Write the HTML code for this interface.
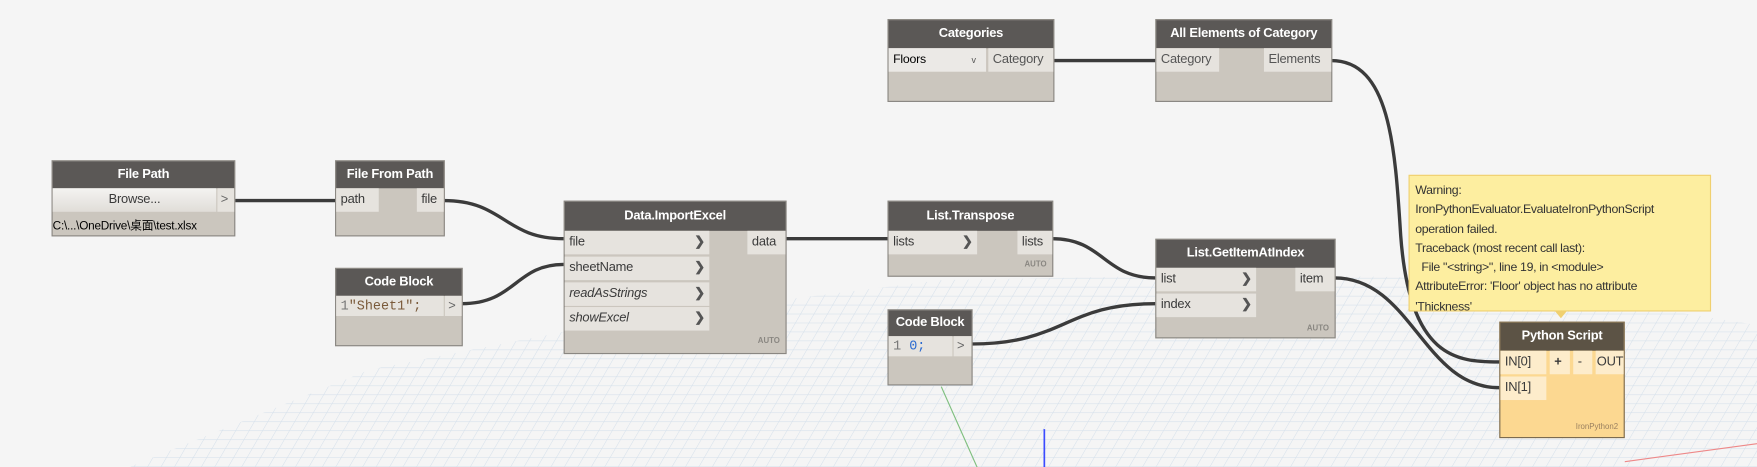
<!DOCTYPE html>
<html><head><meta charset="utf-8"><style>
*{margin:0;padding:0;box-sizing:border-box}
body{width:1757px;height:467px;overflow:hidden;background:#f5f5f5;font-family:"Liberation Sans","Noto Sans CJK SC",sans-serif}
#c{position:absolute;left:0;top:0;width:1568px;height:417px;transform:scale(1.12054);transform-origin:0 0}
.n{position:absolute;background:#cbc6be;border:1px solid #8a8782}
.h{position:absolute;left:0;right:0;top:0;background:#5b5856;color:#fff;font-weight:bold;font-size:11.5px;text-align:center;letter-spacing:-0.2px}
.p{position:absolute;background:#e6e3de;font-size:11.5px;color:#3a3a3a;line-height:21px;padding-left:4px;white-space:nowrap;letter-spacing:-0.2px}
.a{position:absolute;right:4px;top:0;font-weight:bold;color:#555}
.auto{position:absolute;right:5px;font-size:7px;font-weight:bold;color:#8a8782}
svg{position:absolute;left:0;top:0}
</style></head><body><div id="c">
<svg width="1568" height="417">
<defs><pattern id="g" width="12" height="8" patternUnits="userSpaceOnUse" patternTransform="skewX(-30)"><path d="M0 0H12M0 0V8" stroke="#d3dfea" stroke-width="1" fill="none"/></pattern></defs>
<polygon points="115,417 330,330 560,285 840,250 1100,245 1300,248 1568,290 1568,417" fill="url(#g)"/>
<line x1="840" y1="345" x2="872" y2="417" stroke="#7fbf7f" stroke-width="1"/>
<line x1="932" y1="383" x2="932" y2="417" stroke="#3b4bff" stroke-width="1.5"/>
<line x1="1450" y1="412" x2="1568" y2="396" stroke="#e88" stroke-width="1"/>
<g stroke="#3b3b3b" stroke-width="3" fill="none">
<path d="M209 179H299"/>
<path d="M396 179C450 179 450 213 503 213"/>
<path d="M412 271C460 271 460 236 503 236"/>
<path d="M701 213H792"/>
<path d="M939 213C985 213 985 248 1031 248"/>
<path d="M867 307C950 307 950 271 1031 271"/>
<path d="M940 54H1031"/>
<path d="M1188 54C1240 54 1245 130 1250 210C1258 320 1300 323 1338 323"/>
<path d="M1191 248C1260 248 1270 346 1338 346"/>
</g>
</svg>

<div class="n" style="left:792px;top:17px;width:149px;height:74px"><div class="h" style="height:25px;line-height:25px">Categories</div>
<div class="p" style="left:0;top:25px;width:87px;background:#ebe9e6;font-size:11px;color:#000">Floors<span style="position:absolute;left:74px;font-size:8px;color:#555">v</span></div>
<div class="p" style="left:89px;top:25px;width:58px;color:#555">Category</div></div>
<div class="n" style="left:1031px;top:17px;width:158px;height:74px"><div class="h" style="height:25px;line-height:25px">All Elements of Category</div>
<div class="p" style="left:0;top:25px;width:56px;color:#555">Category</div>
<div class="p" style="left:96px;top:25px;width:60px;color:#555">Elements</div></div>
<div class="n" style="left:46px;top:143px;width:164px;height:68px"><div class="h" style="height:24px;line-height:24px">File Path</div>
<div class="p" style="left:0;top:24px;width:146px;text-align:center;padding:0;background:linear-gradient(#f4f3f1,#e0ddd8)">Browse...</div>
<div class="p" style="left:147px;top:24px;width:15px;padding-left:3px;color:#666">&gt;</div>
<div style="position:absolute;left:0;top:50px;font-size:10.5px;color:#000;white-space:nowrap;letter-spacing:-0.2px">C:\...\OneDrive\桌面\test.xlsx</div></div>
<div class="n" style="left:299px;top:143px;width:98px;height:68px"><div class="h" style="height:24px;line-height:24px">File From Path</div>
<div class="p" style="left:0;top:24px;width:38px">path</div>
<div class="p" style="left:72px;top:24px;width:24px">file</div></div>
<div class="n" style="left:503px;top:179px;width:199px;height:137px"><div class="h" style="height:26px;line-height:26px">Data.ImportExcel</div>
<div class="p" style="left:0;top:26px;width:129px">file<span class="a">❯</span></div>
<div class="p" style="left:0;top:49px;width:129px">sheetName<span class="a">❯</span></div>
<div class="p" style="left:0;top:72px;width:129px;font-style:italic">readAsStrings<span class="a" style="font-style:normal">❯</span></div>
<div class="p" style="left:0;top:94px;width:129px;font-style:italic">showExcel<span class="a" style="font-style:normal">❯</span></div>
<div class="p" style="left:163px;top:26px;width:34px">data</div>
<div class="auto" style="top:121px">AUTO</div></div>
<div class="n" style="left:299px;top:239px;width:114px;height:70px"><div class="h" style="height:24px;line-height:24px">Code Block</div>
<div class="p" style="left:0;top:24px;width:96px;height:18px;line-height:18px;font-family:'Liberation Mono',monospace;font-size:12px;color:#7a5a3a;letter-spacing:0"><span style="color:#777">1</span>"Sheet1";</div>
<div class="p" style="left:97px;top:24px;width:15px;height:18px;line-height:18px;padding-left:3px;color:#666">&gt;</div></div>
<div class="n" style="left:792px;top:179px;width:148px;height:68px"><div class="h" style="height:26px;line-height:26px">List.Transpose</div>
<div class="p" style="left:0;top:26px;width:79px">lists<span class="a">❯</span></div>
<div class="p" style="left:115px;top:26px;width:31px">lists</div>
<div class="auto" style="top:53px">AUTO</div></div>
<div class="n" style="left:1031px;top:213px;width:161px;height:89px"><div class="h" style="height:25px;line-height:25px">List.GetItemAtIndex</div>
<div class="p" style="left:0;top:25px;width:89px">list<span class="a">❯</span></div>
<div class="p" style="left:0;top:48px;width:89px">index<span class="a">❯</span></div>
<div class="p" style="left:124px;top:25px;width:35px">item</div>
<div class="auto" style="top:76px">AUTO</div></div>
<div class="n" style="left:792px;top:276px;width:76px;height:68px"><div class="h" style="height:23px;line-height:23px">Code Block</div>
<div class="p" style="left:0;top:23px;width:57px;height:18px;line-height:18px;font-family:'Liberation Mono',monospace;font-size:12px;color:#2a6ad0;letter-spacing:0"><span style="color:#777">1</span> 0;</div>
<div class="p" style="left:58px;top:23px;width:16px;height:18px;line-height:18px;padding-left:3px;color:#666">&gt;</div></div>
<div style="position:absolute;left:1257px;top:156px;width:270px;height:122px;background:#fdeea0;border:1px solid #f0d070;font-size:11px;line-height:17.3px;color:#333;padding:5px 0 0 5px;white-space:nowrap;letter-spacing:-0.3px">Warning:<br>IronPythonEvaluator.EvaluateIronPythonScript<br>operation failed.<br>Traceback (most recent call last):<br>&nbsp; File "&lt;string&gt;", line 19, in &lt;module&gt;<br>AttributeError: 'Floor' object has no attribute<br>'Thickness'</div>
<div style="position:absolute;left:1388px;top:278px;width:0;height:0;border-left:5px solid transparent;border-right:5px solid transparent;border-top:6px solid #f0d070"></div>
<div class="n" style="left:1338px;top:287px;width:112px;height:104px;background:#fcd891;border-color:#7a6a50"><div class="h" style="height:25px;line-height:25px;background:#5c5345">Python Script</div>
<div class="p" style="left:0;top:25px;width:41px;background:#fdeccb">IN[0]</div>
<div class="p" style="left:0;top:48px;width:41px;background:#fdeccb">IN[1]</div>
<div class="p" style="left:44px;top:25px;width:18px;background:#fdeccb;font-weight:bold">+</div>
<div class="p" style="left:65px;top:25px;width:17px;background:#fdeccb">-</div>
<div class="p" style="left:85px;top:25px;width:25px;background:#fdeccb;padding-left:1px">OUT</div>
<div class="auto" style="top:90px;font-weight:normal;color:#9a8060">IronPython2</div></div>
</div></body></html>
